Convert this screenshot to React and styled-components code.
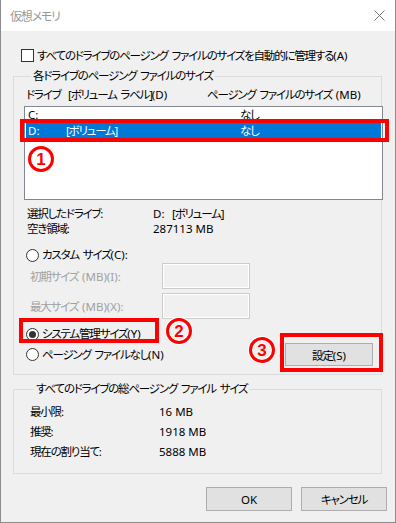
import React from "react";
import styled, { createGlobalStyle } from "styled-components";

const GlobalStyle = createGlobalStyle`
  html, body {
    margin: 0;
    padding: 0;
    background: #ffffff;
  }
  body {
    font-family: "Noto Sans", "Noto Sans CJK JP", sans-serif;
    font-size: 11.5px;
    letter-spacing: -1.2px;
    word-spacing: 2px;
    font-feature-settings: "palt";
    color: #000;
    white-space: nowrap;
  }
`;

const Window = styled.div`
  position: relative;
  width: 396px;
  height: 523px;
  box-sizing: border-box;
  border: 1px solid #8c8c8c;
  border-top: 0;
  background: #f0f0f0;
  display: flex;
  flex-direction: column;
  overflow: hidden;
`;

const TitleBar = styled.div`
  height: 31px;
  flex: none;
  background: #fff;
  display: flex;
  align-items: center;
  justify-content: space-between;
  padding: 0 10px 0 9px;
  color: #999;
  font-size: 12px;
`;

const Body = styled.div`
  flex: 1;
  padding: 0 13px 0 12px;
  display: flex;
  flex-direction: column;
`;

const CheckRow = styled.label`
  margin: 18px 0 0 8px;
  height: 13px;
  display: flex;
  align-items: center;
  gap: 3px;
  line-height: 13px;
`;

const CheckBox = styled.span`
  width: 13px;
  height: 13px;
  box-sizing: border-box;
  border: 1px solid #333;
  background: #fff;
  flex: none;
`;

const Group = styled.fieldset`
  margin: ${({ $top }) => $top}px 0 0;
  padding: 0 0 ${({ $bottom }) => $bottom}px ${({ $left }) => $left}px;
  border: 1px solid #dcdcdc;
  min-width: 0;
  width: 369px;
  box-sizing: border-box;
`;

const Legend = styled.legend`
  margin-left: 7px;
  padding: 0 2px;
  line-height: 16px;
`;

// latin runs keep their natural width
const Num = styled.span`
  letter-spacing: 0;
  word-spacing: 0;
`;

const HeaderRow = styled.div`
  margin-top: 3px;
  height: 16px;
  line-height: 16px;
  padding-left: 2px;
  display: grid;
  grid-template-columns: 181px auto;
`;

const ListBox = styled.div`
  margin-top: 3px;
  width: 359px;
  height: 94px;
  box-sizing: border-box;
  border: 1px solid #828790;
  background: #fff;
`;

const ListRow = styled.div`
  height: 16px;
  line-height: 16px;
  margin: 0 1px;
  padding-left: 2px;
  display: grid;
  grid-template-columns: 38px 174px auto;
  background: ${({ $selected }) => ($selected ? "#0078d7" : "transparent")};
  color: ${({ $selected }) => ($selected ? "#fff" : "#000")};
`;

const InfoGrid = styled.div`
  margin-top: ${({ $top }) => $top}px;
  padding-left: 3px;
  display: grid;
  grid-template-columns: ${({ $col }) => $col}px auto;
  grid-auto-rows: ${({ $row }) => $row}px;
  line-height: ${({ $row }) => $row}px;
  align-items: center;
`;

const RadioRow = styled.label`
  margin-top: ${({ $top }) => $top}px;
  margin-left: 2px;
  height: 14px;
  line-height: 14px;
  display: flex;
  align-items: center;
  gap: 3px;
`;

const Radio = styled.span`
  width: 13px;
  height: 13px;
  box-sizing: border-box;
  border: 1px solid #333;
  border-radius: 50%;
  background: #fff;
  flex: none;
  display: flex;
  align-items: center;
  justify-content: center;
  &::after {
    content: "";
    width: 7px;
    height: 7px;
    border-radius: 50%;
    background: ${({ $checked }) => ($checked ? "#333" : "transparent")};
  }
`;

const SizeRow = styled.div`
  margin-top: ${({ $top }) => $top}px;
  display: grid;
  grid-template-columns: 138px 88px;
  align-items: center;
  color: #a0a0a0;
  & > span {
    padding-left: 6px;
  }
`;

const SizeInput = styled.div`
  width: 88px;
  height: 26px;
  box-sizing: border-box;
  border: 1px solid #cccccc;
  box-shadow: inset 0 0 0 1px #fff;
  background: #f0f0f0;
`;

const OptionRow = styled.div`
  margin-top: 2px;
  height: 23px;
  display: flex;
  align-items: center;
  justify-content: space-between;
  padding-right: 8px;
`;

const Button = styled.button`
  width: ${({ $w }) => $w}px;
  height: ${({ $h }) => $h}px;
  box-sizing: border-box;
  border: 1px solid #adadad;
  background: #e1e1e1;
  font-family: inherit;
  font-size: 11.5px;
  letter-spacing: -1.2px;
  font-feature-settings: "palt";
  color: #000;
  padding: 0;
`;

const Footer = styled.div`
  margin: 13px -5px 0 0;
  display: flex;
  justify-content: flex-end;
  gap: 9px;
`;

const RedBox = styled.div`
  position: absolute;
  left: ${({ $x }) => $x}px;
  top: ${({ $y }) => $y}px;
  width: ${({ $w }) => $w}px;
  height: ${({ $h }) => $h}px;
  box-sizing: border-box;
  border: 4px solid #ff0000;
  pointer-events: none;
`;

const Badge = styled.div`
  position: absolute;
  left: ${({ $x }) => $x - 13}px;
  top: ${({ $y }) => $y - 13}px;
  width: 26px;
  height: 26px;
  box-sizing: border-box;
  border: 3px solid #ff0000;
  border-radius: 50%;
  box-shadow: 0 0 0 1px #fff, inset 0 0 0 1px #fff;
  display: flex;
  align-items: center;
  justify-content: center;
  color: #ff0000;
  font-family: "Liberation Sans", Arial, sans-serif;
  font-weight: bold;
  font-size: 17px;
  letter-spacing: 0;
  line-height: 1;
  text-shadow: 0 0 1px #fff;
`;

function CloseIcon() {
  return (
    <svg width="11" height="11" viewBox="0 0 11 11">
      <path d="M0.5 0.5 L10.5 10.5 M10.5 0.5 L0.5 10.5" stroke="#777" strokeWidth="1" fill="none" />
    </svg>
  );
}

export default function App() {
  return (
    <>
      <GlobalStyle />
      <Window>
        <TitleBar>
          <span>仮想メモリ</span>
          <CloseIcon />
        </TitleBar>
        <Body>
          <CheckRow>
            <CheckBox />
            <span>
              すべてのドライブのページング ファイルのサイズを自動的に管理する<Num>(A)</Num>
            </span>
          </CheckRow>

          <Group $top={6} $bottom={8} $left={10}>
            <Legend>各ドライブのページング ファイルのサイズ</Legend>
            <HeaderRow>
              <span>ドライブ&nbsp;&nbsp;[ボリューム ラベル]<Num>(D)</Num></span>
              <span>ページング ファイルのサイズ <Num>(MB)</Num></span>
            </HeaderRow>
            <ListBox>
              <ListRow>
                <Num>C:</Num>
                <span />
                <span>なし</span>
              </ListRow>
              <ListRow $selected>
                <Num>D:</Num>
                <span>[ボリューム]</span>
                <span>なし</span>
              </ListRow>
            </ListBox>
            <InfoGrid $top={6} $col={126} $row={15}>
              <span>選択したドライブ:</span>
              <span><Num>D:</Num>&nbsp;&nbsp;[ボリューム]</span>
              <span>空き領域:</span>
              <Num>287113 MB</Num>
            </InfoGrid>
            <RadioRow $top={12}>
              <Radio />
              <span>カスタム サイズ<Num>(C):</Num></span>
            </RadioRow>
            <SizeRow $top={1}>
              <span>初期サイズ <Num>(MB)(I):</Num></span>
              <SizeInput />
            </SizeRow>
            <SizeRow $top={4}>
              <span>最大サイズ <Num>(MB)(X):</Num></span>
              <SizeInput />
            </SizeRow>
            <RadioRow $top={8}>
              <Radio $checked />
              <span>システム管理サイズ<Num>(Y)</Num></span>
            </RadioRow>
            <OptionRow>
              <RadioRow $top={0}>
                <Radio />
                <span>ページング ファイルなし<Num>(N)</Num></span>
              </RadioRow>
              <Button $w={88} $h={23}>設定<Num>(S)</Num></Button>
            </OptionRow>
          </Group>

          <Group $top={6} $bottom={11} $left={13}>
            <Legend>すべてのドライブの総ページング ファイル サイズ</Legend>
            <InfoGrid $top={5} $col={129} $row={20}>
              <span>最小限:</span>
              <Num>16 MB</Num>
              <span>推奨:</span>
              <Num>1918 MB</Num>
              <span>現在の割り当て:</span>
              <Num>5888 MB</Num>
            </InfoGrid>
          </Group>

          <Footer>
            <Button $w={86} $h={24}><Num>OK</Num></Button>
            <Button $w={86} $h={24}>キャンセル</Button>
          </Footer>
        </Body>

        <RedBox $x={19} $y={119} $w={369} $h={23} />
        <RedBox $x={18} $y={318} $w={140} $h={25} />
        <RedBox $x={279} $y={333} $w={103} $h={39} />
        <Badge $x={40} $y={159}>1</Badge>
        <Badge $x={178} $y={331}>2</Badge>
        <Badge $x={261} $y={350}>3</Badge>
      </Window>
    </>
  );
}
